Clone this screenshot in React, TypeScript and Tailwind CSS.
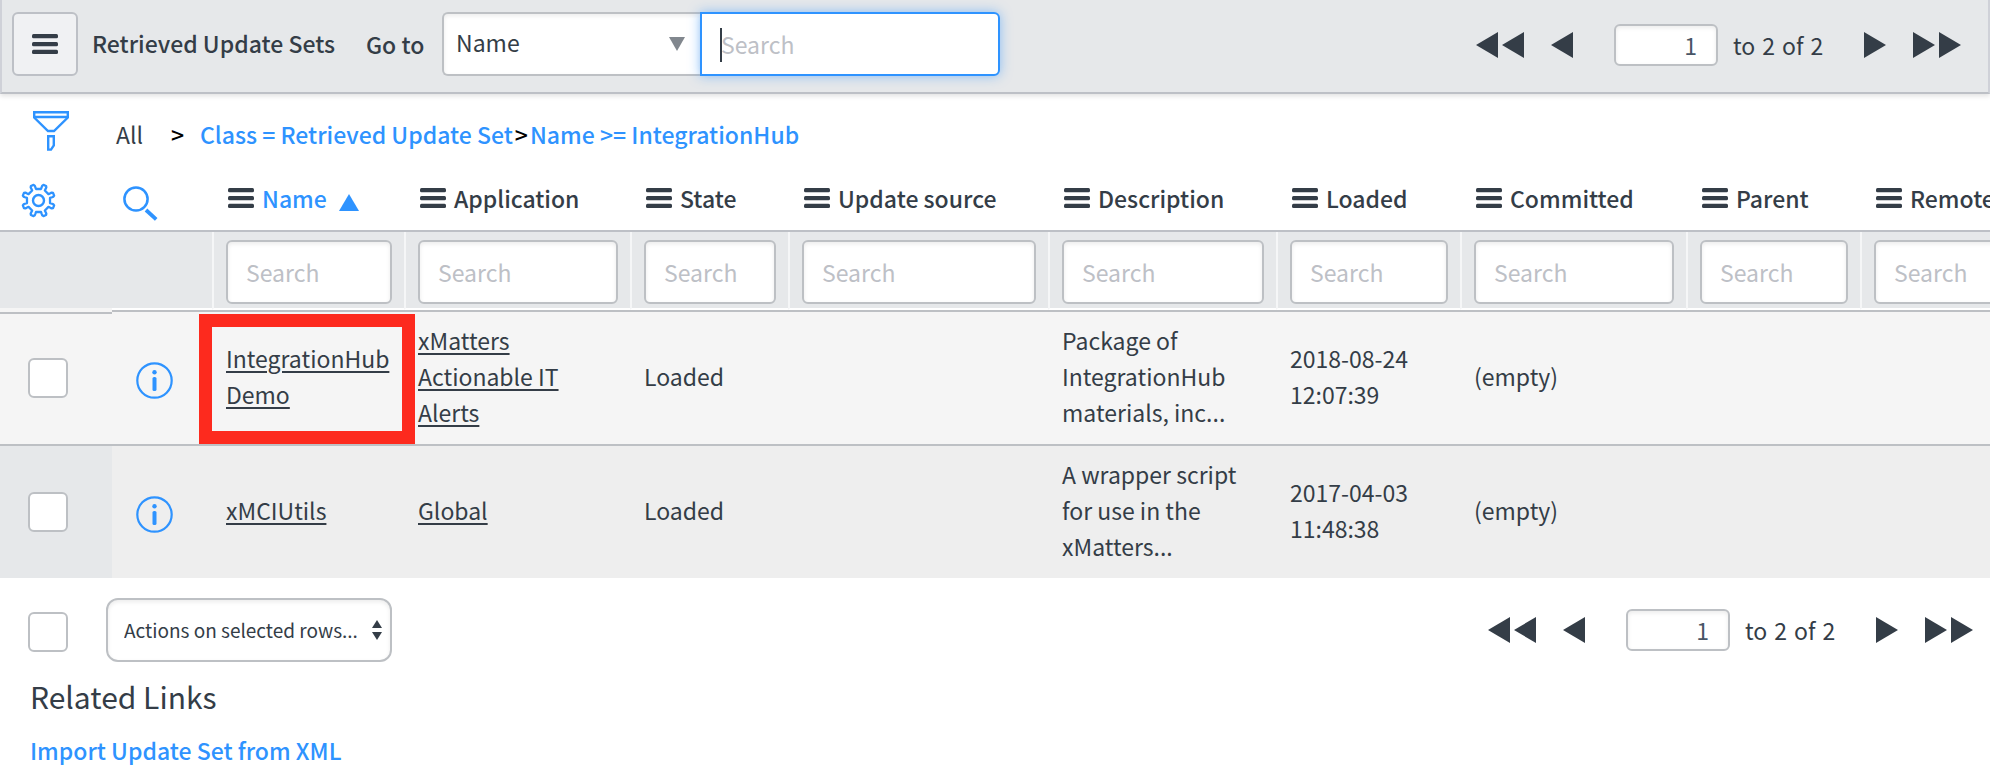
import type { ReactNode } from "react";

const BORDER = "border-[#bdc0c6]";
const FIELD =
  "border-2 border-[#bdc0c4] bg-white shadow-[inset_0_2px_4px_rgba(0,0,0,0.08)] outline-none placeholder:text-[#bdc0c6]";

type Column = { label: string; width: string; sorted?: boolean };

const columns: Column[] = [
  { label: "Name", width: "w-[192px]", sorted: true },
  { label: "Application", width: "w-[226px]" },
  { label: "State", width: "w-[158px]" },
  { label: "Update source", width: "w-[260px]" },
  { label: "Description", width: "w-[228px]" },
  { label: "Loaded", width: "w-[184px]" },
  { label: "Committed", width: "w-[226px]" },
  { label: "Parent", width: "w-[174px]" },
  { label: "Remote", width: "w-[220px]" },
];

type Row = {
  name: string;
  application: string;
  state: string;
  description: string;
  loaded: string;
  committed: string;
  highlighted?: boolean;
};

const rows: Row[] = [
  {
    name: "IntegrationHub Demo",
    application: "xMatters Actionable IT Alerts",
    state: "Loaded",
    description: "Package of IntegrationHub materials, inc...",
    loaded: "2018-08-24 12:07:39",
    committed: "(empty)",
    highlighted: true,
  },
  {
    name: "xMCIUtils",
    application: "Global",
    state: "Loaded",
    description: "A wrapper script for use in the xMatters...",
    loaded: "2017-04-03 11:48:38",
    committed: "(empty)",
  },
];

function MenuIcon() {
  return (
    <svg className="block shrink-0" width="26" height="20" viewBox="0 0 26 20" fill="currentColor" aria-hidden="true">
      <rect x="0" y="0" width="26" height="4.2" rx="1.5" />
      <rect x="0" y="8" width="26" height="4.2" rx="1.5" />
      <rect x="0" y="15.8" width="26" height="4.2" rx="1.5" />
    </svg>
  );
}

function FunnelIcon() {
  return (
    <svg className="block" width="36" height="40" viewBox="0 0 36 40" fill="none" stroke="currentColor" strokeWidth="2.4" aria-hidden="true">
      <path d="M1.2 1.2H34.8V6.5L21 20H15L1.2 6.5Z" />
      <path d="M1 6H35" />
      <path d="M15.2 25.2H20.8V34.5L18 38.6H15.2Z" />
    </svg>
  );
}

// One tooth as [degrees from its middle, distance from the hub].
const TOOTH = [
  [-10, 11.8],
  [-9, 14],
  [-8, 15.4],
  [-5, 16.4],
  [5, 16.4],
  [8, 15.4],
  [9, 14],
  [10, 11.8],
];

const GEAR_POINTS = Array.from({ length: 8 })
  .flatMap((_, i) =>
    TOOTH.map(([offset, radius]) => {
      const angle = ((i + 0.5) * 45 + offset) * (Math.PI / 180);
      return `${(17.5 + radius * Math.cos(angle)).toFixed(2)},${(17.5 + radius * Math.sin(angle)).toFixed(2)}`;
    }),
  )
  .join(" ");

function GearIcon() {
  return (
    <svg className="block" width="35" height="35" viewBox="0 0 35 35" fill="none" stroke="currentColor" strokeWidth="2.3" strokeLinejoin="round" aria-hidden="true">
      <polygon points={GEAR_POINTS} />
      <circle cx="17.5" cy="17.5" r="5.5" strokeWidth="2.4" />
    </svg>
  );
}

function SearchIcon() {
  return (
    <svg className="block" width="35" height="35" viewBox="0 0 35 35" fill="none" stroke="currentColor" aria-hidden="true">
      <circle cx="13" cy="13" r="11.6" strokeWidth="2.5" />
      <path d="M23 24L33.2 33.3" strokeWidth="3.8" />
    </svg>
  );
}

function InfoIcon() {
  return (
    <svg className="block" width="37" height="37" viewBox="0 0 37 37" fill="none" aria-hidden="true">
      <circle cx="18.5" cy="18.5" r="17.2" stroke="currentColor" strokeWidth="2.2" />
      <circle cx="18.5" cy="10.2" r="2.2" fill="currentColor" />
      <rect x="16.5" y="15" width="4" height="14" rx="1.6" fill="currentColor" />
    </svg>
  );
}

function Arrow({ dir, double }: { dir: "left" | "right"; double?: boolean }) {
  const d = dir === "left" ? "M22 0V26L0 13Z" : "M0 0V26L22 13Z";
  return (
    <svg className="block" width={double ? 48 : 22} height="26" viewBox={double ? "0 0 48 26" : "0 0 22 26"} fill="currentColor" aria-hidden="true">
      <path d={d} />
      {double && <path d={d} transform="translate(26 0)" />}
    </svg>
  );
}

function Pager() {
  return (
    <nav className="flex items-center" aria-label="Pagination">
      <button type="button" aria-label="First page">
        <Arrow dir="left" double />
      </button>
      <button type="button" aria-label="Previous page" className="ml-[27px]">
        <Arrow dir="left" />
      </button>
      <input
        aria-label="Skip to row"
        defaultValue="1"
        className={`ml-[41px] h-[42px] w-[104px] rounded-md pr-[19px] text-right leading-9 text-[#485566] ${FIELD}`}
      />
      <span className="ml-[15px] flex w-[92px] gap-[7px] whitespace-nowrap">
        <span>to</span>
        <span>2</span>
        <span>of</span>
        <span>2</span>
      </span>
      <button type="button" aria-label="Next page" className="ml-[39px]">
        <Arrow dir="right" />
      </button>
      <button type="button" aria-label="Last page" className="ml-[27px]">
        <Arrow dir="right" double />
      </button>
    </nav>
  );
}

function Tick({ label }: { label: string }) {
  return (
    <input
      type="checkbox"
      aria-label={label}
      className="block size-10 shrink-0 appearance-none rounded-md border-2 border-[#bdc0c4] bg-white"
    />
  );
}

function Cell({ first, children }: { first: boolean; children?: ReactNode }) {
  return (
    <td className={`h-[134px] border-t-2 border-[#bdc0c4] pt-[10px] pr-3 pb-[14px] pl-[14px] align-middle ${first ? "bg-[#f5f5f5]" : "bg-[#eeeeee]"}`}>
      {children}
    </td>
  );
}

export default function App() {
  return (
    <div className="min-h-screen w-full overflow-hidden bg-white font-['Noto_Sans_CJK_SC','Noto_Sans',sans-serif] text-[23px] leading-9 text-[#343d47]">
      <header className="flex h-[94px] justify-between border-x-2 border-b-2 border-x-[#cfd1d8] border-b-[#bdc0c6] bg-[#e6e8ea] pr-[27px] pl-[10px] shadow-[0_2px_5px_rgba(0,0,0,0.12)]">
        <div className="flex items-center pb-1">
          <button type="button" aria-label="List menu" className={`flex h-16 w-[66px] items-center justify-center rounded-md border-2 ${BORDER} bg-[#f0f1f3]`}>
            <MenuIcon />
          </button>
          <h1 className="ml-[14px] w-[274px] pb-[2px] font-medium whitespace-nowrap">Retrieved Update Sets</h1>
          <label htmlFor="goto-field" className="w-[76px] font-medium whitespace-nowrap">
            Go to
          </label>
          <div className="relative">
            <select id="goto-field" className={`block h-16 w-[258px] appearance-none rounded-l-md border-r-0 pb-1 pl-3 ${FIELD}`}>
              <option>Name</option>
            </select>
            <svg className="pointer-events-none absolute top-[25px] right-[15px]" width="16" height="14" viewBox="0 0 16 14" aria-hidden="true">
              <path d="M0 0H16L8 14Z" fill="#81878e" />
            </svg>
          </div>
          <div className="relative">
            <input
              aria-label="Search"
              placeholder="Search"
              className="block h-16 w-[300px] rounded-r-md border-2 border-[#2e93ff] bg-white pl-[19px] shadow-[0_0_12px_rgba(46,147,255,0.5)] outline-none placeholder:text-[#bdc0c6]"
            />
            <span className="absolute top-4 left-5 h-[34px] w-[2px] bg-[#343d47]" />
          </div>
        </div>
        <div className="flex items-center pb-[2px]">
          <Pager />
        </div>
      </header>

      <div className="flex h-[82px] items-center pb-[2px] pl-[33px] text-[#2e93ff]">
        <button type="button" aria-label="Filter" className="pb-[6px]">
          <FunnelIcon />
        </button>
        <a href="#all" className="ml-[47px] w-[55px] text-[#343d47]">
          All
        </a>
        <span className="w-[29px] font-medium text-black">&gt;</span>
        <a href="#class" className="font-medium">
          Class = Retrieved Update Set
        </a>
        <span className="mx-[2px] font-medium text-black">&gt;</span>
        <a href="#name" className="font-medium">
          Name &gt;= IntegrationHub
        </a>
      </div>

      <div className="overflow-hidden">
        <table className="w-[1980px] table-fixed border-separate border-spacing-0 text-left">
          <colgroup>
            <col className="w-[112px]" />
            <col className="w-[100px]" />
            {columns.map((c) => (
              <col key={c.label} className={c.width} />
            ))}
          </colgroup>
          <thead>
            <tr>
              <th className={`h-14 border-b-2 ${BORDER} pb-[6px] pl-[21px]`}>
                <button type="button" aria-label="Personalize list" className="block text-[#2e93ff]">
                  <GearIcon />
                </button>
              </th>
              <th className={`border-b-2 ${BORDER} pl-[11px]`}>
                <button type="button" aria-label="Toggle search" className="block text-[#2e93ff]">
                  <SearchIcon />
                </button>
              </th>
              {columns.map((c) => (
                <th key={c.label} className={`border-b-2 ${BORDER} pb-[10px] pl-4 font-medium`}>
                  <div className="flex items-center gap-2 whitespace-nowrap">
                    <MenuIcon />
                    {c.sorted ? (
                      <a href="#sort" className="flex items-center gap-3 text-[#2e93ff]">
                        {c.label}
                        <svg className="mt-2" width="20" height="17" viewBox="0 0 20 17" fill="currentColor" aria-hidden="true">
                          <path d="M10 0L20 17H0Z" />
                        </svg>
                      </a>
                    ) : (
                      <a href="#sort">{c.label}</a>
                    )}
                  </div>
                </th>
              ))}
            </tr>
            <tr>
              <td className="h-[78px] border-b-2 border-[#f5f5f5] bg-[#e6e8ea]" />
              <td className="border-b-2 border-white bg-[#e6e8ea]" />
              {columns.map((c) => (
                <td key={c.label} className="border-b-2 border-l-2 border-b-white border-l-[#f5f6f7] bg-[#e6e8ea] py-0 pr-3 pl-3">
                  <input
                    aria-label={`Search ${c.label}`}
                    placeholder="Search"
                    className={`mt-1 block h-16 w-full rounded-md pl-[18px] ${FIELD}`}
                  />
                </td>
              ))}
            </tr>
          </thead>
          <tbody>
            {rows.map((r, i) => {
              const first = i === 0;
              return (
                <tr key={r.name}>
                  <td
                    className={`border-t-2 pl-7 ${
                      first
                        ? "border-[#f5f5f5] bg-[#f5f5f5] shadow-[inset_0_2px_0_#bdc0c4]"
                        : "border-[#bdc0c4] bg-[#e6e8ea]"
                    }`}
                  >
                    <Tick label={`Select ${r.name}`} />
                  </td>
                  <td className={`border-t-2 border-[#bdc0c4] pt-[5px] pl-6 ${first ? "bg-[#f5f5f5]" : "bg-[#eeeeee]"}`}>
                    <button type="button" aria-label={`Preview ${r.name}`} className="block text-[#2e93ff]">
                      <InfoIcon />
                    </button>
                  </td>
                  <td className={`relative border-t-2 border-[#bdc0c4] pt-[10px] pr-3 pb-[14px] pl-[14px] ${first ? "bg-[#f5f5f5]" : "bg-[#eeeeee]"}`}>
                    <a href="#record" className="underline decoration-2 underline-offset-3">
                      {r.name}
                    </a>
                    {r.highlighted && (
                      <span className="pointer-events-none absolute top-[2px] -right-[11px] bottom-0 -left-[13px] z-10 border-[13px] border-[#fd2a1e]" />
                    )}
                  </td>
                  <Cell first={first}>
                    <a href="#application" className="underline decoration-2 underline-offset-3">
                      {r.application}
                    </a>
                  </Cell>
                  <Cell first={first}>{r.state}</Cell>
                  <Cell first={first} />
                  <Cell first={first}>{r.description}</Cell>
                  <Cell first={first}>{r.loaded}</Cell>
                  <Cell first={first}>{r.committed}</Cell>
                  <Cell first={first} />
                  <Cell first={first} />
                </tr>
              );
            })}
          </tbody>
        </table>
      </div>

      <div className="flex items-center justify-between pt-5 pr-[17px] pl-7">
        <div className="flex items-center">
          <div className="pt-1">
            <Tick label="Select all rows" />
          </div>
          <div className="relative ml-[38px]">
            <select
              aria-label="Actions on selected rows"
              className={`block h-16 w-[286px] appearance-none rounded-xl pl-4 text-[19px] ${FIELD}`}
            >
              <option>Actions on selected rows...</option>
            </select>
            <svg className="pointer-events-none absolute top-[22px] right-[10px]" width="10" height="20" viewBox="0 0 10 20" fill="currentColor" aria-hidden="true">
              <path d="M5 0L10 8H0Z" />
              <path d="M5 20L10 12H0Z" />
            </svg>
          </div>
        </div>
        <Pager />
      </div>

      <section className="pt-[14px] pl-[30px]">
        <h2 className="text-[30px] leading-10">Related Links</h2>
        <a href="#import" className="mt-4 inline-block font-medium text-[#2e93ff]">
          Import Update Set from XML
        </a>
      </section>
    </div>
  );
}
